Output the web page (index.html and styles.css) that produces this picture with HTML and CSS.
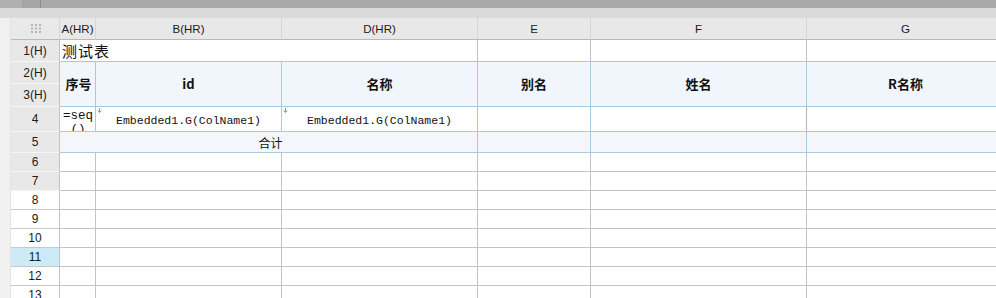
FILE: index.html
```html
<!DOCTYPE html>
<html lang="zh">
<head>
<meta charset="utf-8">
<title>Sheet</title>
<link rel="stylesheet" href="styles.css">
</head>
<body>
<div class="page">
  <div class="topbar"><div class="seg1"></div><div class="seg2"></div><div class="seg3"></div></div>
  <div class="band"></div>
  <div class="sheet">
    <div class="strip"></div>
    <div class="corner"><svg width="10" height="9" viewBox="0 0 10 9"><g fill="#b4b4b4"><rect x="0" y="0" width="2" height="2"/><rect x="4" y="0" width="2" height="2"/><rect x="8" y="0" width="2" height="2"/><rect x="0" y="3.5" width="2" height="2"/><rect x="4" y="3.5" width="2" height="2"/><rect x="8" y="3.5" width="2" height="2"/><rect x="0" y="7" width="2" height="2"/><rect x="4" y="7" width="2" height="2"/><rect x="8" y="7" width="2" height="2"/></g></svg></div>
    <div class="ch">A(HR)</div>
    <div class="ch">B(HR)</div>
    <div class="ch">D(HR)</div>
    <div class="ch">E</div>
    <div class="ch">F</div>
    <div class="ch">G</div>

    <div class="rl rl-g">1(H)</div>
    <div class="c r1 span3 title">测试表</div>
    <div class="c r1"></div>
    <div class="c r1"></div>
    <div class="c r1"></div>

    <div class="rl rl-g rl-b">2(H)</div>
    <div class="c hdr rows2 lbl-l">序号</div>
    <div class="c hdr rows2">id</div>
    <div class="c hdr rows2">名称</div>
    <div class="c hdr rows2">别名</div>
    <div class="c hdr rows2">姓名</div>
    <div class="c hdr rows2">R名称</div>
    <div class="rl rl-g rl-b">3(H)</div>

    <div class="rl rl-g rl-b">4</div>
    <div class="c body4 seq">=seq()</div>
    <div class="c body4 mono"><svg class="mark" width="5" height="5" viewBox="0 0 5 5"><path d="M2.5 0V4.5M0.5 2.5L2.5 4.5L4.5 2.5" stroke="#8a8a8a" fill="none" stroke-width="0.9"/></svg>Embedded1.G(ColName1)</div>
    <div class="c body4 mono"><svg class="mark" width="5" height="5" viewBox="0 0 5 5"><path d="M2.5 0V4.5M0.5 2.5L2.5 4.5L4.5 2.5" stroke="#8a8a8a" fill="none" stroke-width="0.9"/></svg>Embedded1.G(ColName1)</div>
    <div class="c body4"></div>
    <div class="c body4 fg"></div>
    <div class="c body4"></div>

    <div class="rl rl-g rl-b">5</div>
    <div class="c sum span3">合计</div>
    <div class="c sum"></div>
    <div class="c sum"></div>
    <div class="c sum"></div>

    <div class="rl rl-g">6</div>
    <div class="c"></div><div class="c"></div><div class="c"></div><div class="c"></div><div class="c"></div><div class="c"></div>
    <div class="rl rl-g">7</div>
    <div class="c"></div><div class="c"></div><div class="c"></div><div class="c"></div><div class="c"></div><div class="c"></div>
    <div class="rl">8</div>
    <div class="c"></div><div class="c"></div><div class="c"></div><div class="c"></div><div class="c"></div><div class="c"></div>
    <div class="rl">9</div>
    <div class="c"></div><div class="c"></div><div class="c"></div><div class="c"></div><div class="c"></div><div class="c"></div>
    <div class="rl">10</div>
    <div class="c"></div><div class="c"></div><div class="c"></div><div class="c"></div><div class="c"></div><div class="c"></div>
    <div class="rl rl-sel">11</div>
    <div class="c"></div><div class="c"></div><div class="c"></div><div class="c"></div><div class="c"></div><div class="c"></div>
    <div class="rl">12</div>
    <div class="c"></div><div class="c"></div><div class="c"></div><div class="c"></div><div class="c"></div><div class="c"></div>
    <div class="rl">13</div>
    <div class="c"></div><div class="c"></div><div class="c"></div><div class="c"></div><div class="c"></div><div class="c"></div>
  </div>
</div>
</body>
</html>
```
FILE: styles.css
```css
* { box-sizing: border-box; }
html, body { margin: 0; padding: 0; background: #fff; }
body { width: 996px; height: 298px; overflow: hidden; font-family: "Liberation Sans", "Noto Sans CJK SC", sans-serif; color: #1a1a1a; }
.page { width: 996px; height: 298px; overflow: hidden; }

.topbar { display: flex; height: 8px; }
.seg1 { width: 22px; background: #b0b0b0; }
.seg2 { width: 19px; background: #a5a5a5; border-right: 1px solid #8e8e8e; }
.seg3 { flex: 1; background: #a9a9a9; }
.band { height: 10px; background: #dadada; }

.sheet {
  display: grid;
  grid-template-columns: 11px 49px 36px 186px 196px 113px 216px 198px;
  grid-template-rows: 22px 22px 22px 23px 25px 21px repeat(8, 19px);
  width: 1005px;
}
.strip { grid-column: 1; grid-row: 1 / span 14; background: #f0f0f0; border-right: 1px solid #e3e3e3; }

.corner { background: #e9e9e9; border-right: 1px solid #d6d6d6; border-bottom: 1px solid #b9b9b9; display: flex; align-items: center; justify-content: center; }
.corner svg { margin-left: 2px; }
.ch { background: #e8e8e8; border-right: 1px solid #d6d6d6; border-bottom: 1px solid #b9b9b9; display: flex; align-items: center; justify-content: center; font-size: 11.5px; color: #1a1a1a; }

.rl { background: #fff; border-bottom: 1px solid #c8c8c8; border-right: 1px solid #c3c3c3; display: flex; align-items: center; justify-content: center; font-size: 12px; color: #1a1a1a; }
.rl-g { background: #e8e8e8; border-bottom-color: #f6f6f6; }
.rl-b { border-right-color: #a9c9dc; }
.rl-sel { background: #cdeaf7; }

.c { border-right: 1px solid #c3c3c3; border-bottom: 1px solid #c3c3c3; background: #fff; overflow: hidden; position: relative; }
.span3 { grid-column: span 3; }
.rows2 { grid-row: span 2; }

.r1 { border-bottom-color: #a9c9dc; }
.title { font-family: "Noto Sans CJK SC", sans-serif; font-size: 15px; letter-spacing: 1px; display: flex; align-items: center; padding-left: 2px; color: #111; }

.hdr { background: #f0f6fb; border-color: #a9c9dc; font-family: "Noto Sans CJK SC", sans-serif; font-weight: 700; font-size: 13px; display: flex; align-items: center; justify-content: center; color: #111; padding-bottom: 1px; }
.hdr.lbl-l { justify-content: center; padding-left: 2px; }

.body4 { border-color: #a9c9dc; }
.body4.fg { border-right-color: #b5b5b5; }
.seq { font-family: "Liberation Mono", monospace; font-size: 12.5px; line-height: 14px; text-align: center; word-break: break-all; padding: 2px 1px 0 2px; color: #111; }
.mono { font-family: "Liberation Mono", monospace; font-size: 11.5px; display: flex; align-items: center; justify-content: center; padding-top: 3px; color: #111; }
.mark { position: absolute; left: 1px; top: 1px; }

.sum { background: #f3f7fb; border-color: #a9c9dc; font-family: "Noto Sans CJK SC", sans-serif; font-size: 12px; display: flex; align-items: center; justify-content: center; padding-left: 4px; color: #111; }
```
